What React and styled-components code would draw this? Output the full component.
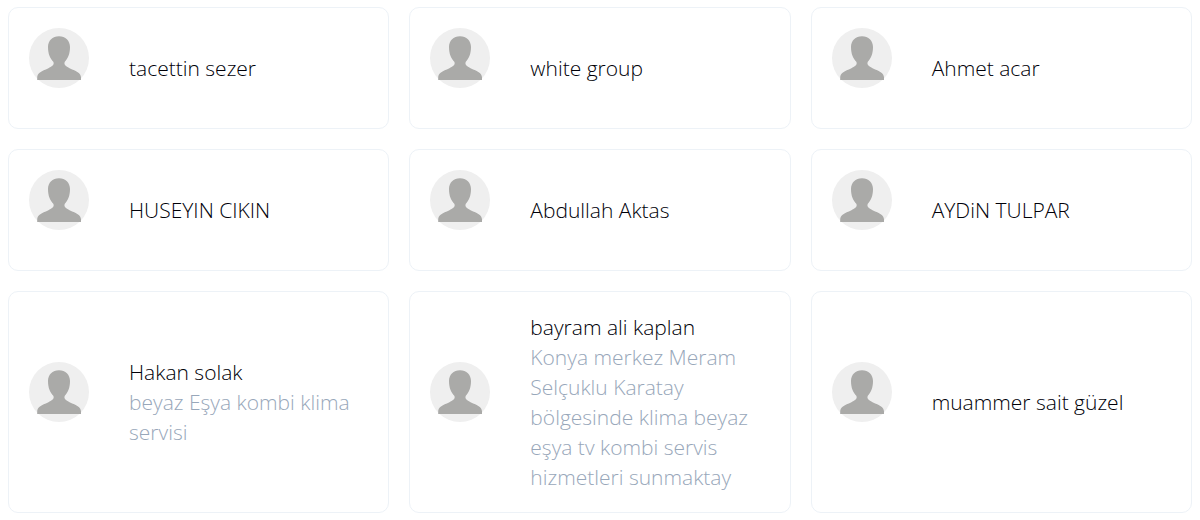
import styled, { createGlobalStyle } from "styled-components"

const people = [
  { name: "tacettin sezer" },
  { name: "white group" },
  { name: "Ahmet acar" },
  { name: "HUSEYIN CIKIN" },
  { name: "Abdullah Aktas" },
  { name: "AYDiN TULPAR" },
  { name: "Hakan solak", about: "beyaz Eşya kombi klima servisi" },
  {
    name: "bayram ali kaplan",
    about: "Konya merkez Meram Selçuklu Karatay bölgesinde klima beyaz eşya tv kombi servis hizmetleri sunmaktay",
  },
  { name: "muammer sait güzel" },
];

function Person({name, about}) {
    return (
        <Card>
            <Avatar viewBox="0 0 60 60" aria-hidden="true">
              <circle cx="30" cy="30" r="30" fill="#efefef" />
              <path
                fill="#aaaaa8"
                d="M30 8.2C36.5 8.2 41 12.6 41 19C41 26 38.8 30.6 35.8 33.8C34.6 36.4 36.4 38.4 41 40.4C47 43 52 44.8 52 49.6V52H8.2V49.6C8.2 44.8 13 43 19 40.4C23.6 38.4 25.6 36.4 24.3 33.8C21.2 30.6 19 26 19 19C19 12.6 23.5 8.2 30 8.2Z"
              />
            </Avatar>
            <Info>
              <Name>{name}</Name>
              {about && <About>{about}</About>}
            </Info>
        </Card>
    );
}

function App() {
    return (
        <>
            <GlobalStyle />
            <List>
              {people.map((person) => (
                <Person key={person.name} {...person} />
              ))}
            </List>
        </>
    );
}

export default App;

const GlobalStyle = createGlobalStyle`
  * {
    box-sizing: border-box;
  }

  body {
    margin: 0;
    background-color: white;
    font-family: "Open Sans", "Noto Sans", sans-serif;
    font-size: 21px;
    font-weight: 300;
    line-height: 30px;
  }
`;

const List = styled.ul`
  display: grid;
  grid-template-columns: repeat(3, minmax(0, 1fr));
  gap: 20px;
  margin: 0;
  padding: 7px 8px 0;
  list-style: none;
`;

const Card = styled.li`
  display: flex;
  align-items: center;
  gap: 40px;
  padding: 20px;
  border: 1px solid #edf2f7;
  border-radius: 10px;
`;

const Avatar = styled.svg`
  flex: none;
  width: 60px;
  height: 60px;
  margin-bottom: 20px;
`;

const Info = styled.div`
  flex: 1;
  min-width: 0;
`;

const Name = styled.p`
  margin: 0;
  color: #000008;
`;

const About = styled.p`
  margin: 0;
  color: #98a7ba;
`;
